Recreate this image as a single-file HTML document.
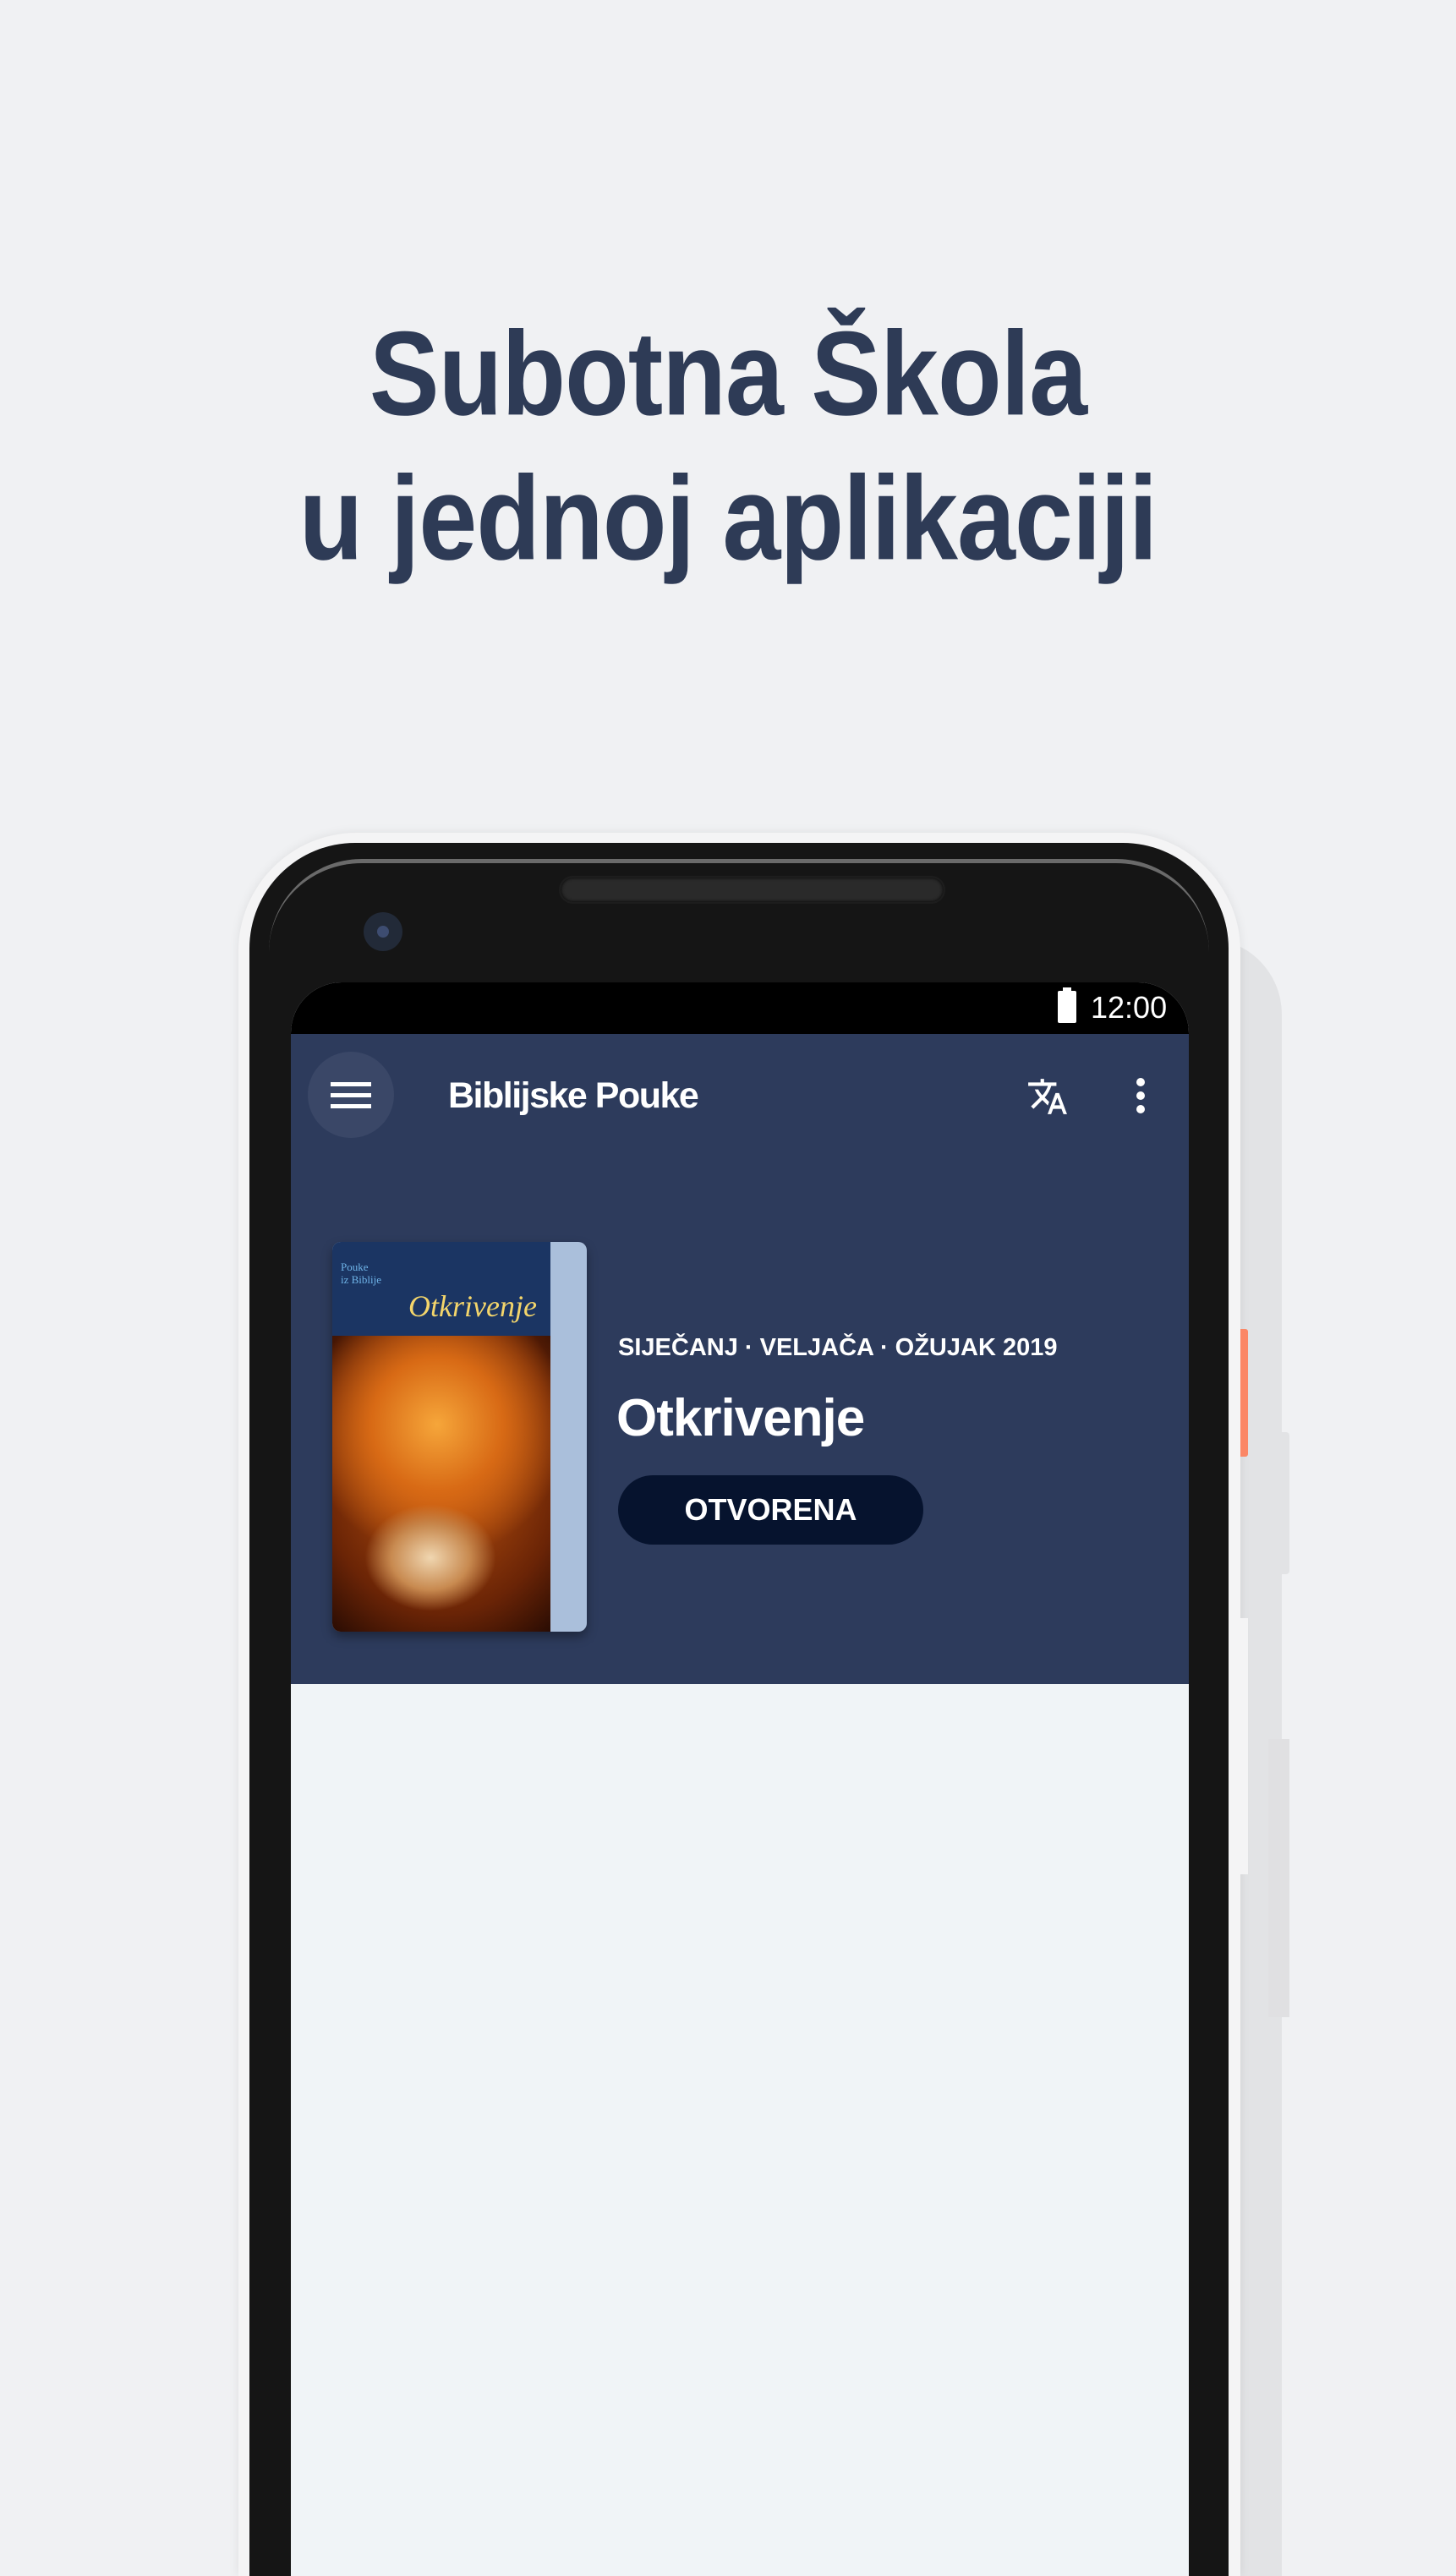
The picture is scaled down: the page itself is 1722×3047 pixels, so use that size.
<!DOCTYPE html>
<html style="overflow:hidden;width:1722px;height:3047px"><head><meta charset="utf-8"><style>
*{margin:0;padding:0;box-sizing:border-box}
body{width:1722px;height:3047px;background:#f0f1f3;position:relative;overflow:hidden;font-family:"Liberation Sans",sans-serif}
.a{position:absolute}
h1{position:absolute;left:0;width:1722px;text-align:center;color:#2e3b56;font-weight:700;font-size:124px;letter-spacing:-1px;transform:scaleY(1.14);transform-origin:center bottom}
</style></head><body>
<h1 style="top:378px;line-height:150px">Subotna Škola</h1>
<h1 style="top:549px;line-height:150px">u jednoj aplikaciji</h1>

<div class="a" style="left:1400px;top:1110px;width:116px;height:1937px;background:#e2e3e5;border-radius:0 90px 0 0"></div>
<div class="a" style="left:1500px;top:1694px;width:25px;height:168px;background:#e2e3e5;border-radius:0 4px 4px 0"></div>
<div class="a" style="left:1500px;top:2057px;width:25px;height:329px;background:#e0e0e2"></div>
<div class="a" style="left:282px;top:985px;width:1185px;height:2062px;background:#f4f4f5;border-radius:140px 140px 0 0;box-shadow:0 0 12px rgba(0,0,0,.08)"></div>
<div class="a" style="left:1467px;top:1572px;width:9px;height:151px;background:#fb8766;border-radius:0 3px 3px 0"></div>
<div class="a" style="left:1467px;top:1914px;width:9px;height:303px;background:#f4f4f5"></div>
<div class="a" style="left:295px;top:997px;width:1158px;height:2050px;background:#151515;border-radius:125px 125px 0 0"></div>
<div class="a" style="left:318px;top:1016px;width:1112px;height:200px;border-top:5px solid #6a6a6a;border-radius:110px 110px 0 0"></div>
<div class="a" style="left:661px;top:1036px;width:457px;height:33px;background:#2a2a2a;border:2px solid #1d1d1d;border-radius:17px;box-shadow:inset 0 0 4px #000"></div>
<div class="a" style="left:430px;top:1079px;width:46px;height:46px;background:#222a38;border-radius:50%"></div>
<div class="a" style="left:446px;top:1095px;width:14px;height:14px;background:#3d4c70;border-radius:50%"></div>
<div class="a" style="left:344px;top:1162px;width:1062px;height:1885px;background:#f0f4f7;border-radius:60px 60px 0 0;overflow:hidden">
  <div class="a" style="left:0;top:0;width:1062px;height:61px;background:#000"></div>
  <div class="a" style="left:907px;top:10px;width:22px;height:38px;background:#fff;border-radius:2px"></div>
  <div class="a" style="left:913px;top:6px;width:10px;height:5px;background:#fff"></div>
  <div class="a" style="left:946px;top:8px;color:#fff;font-size:36px;line-height:44px">12:00</div>
  <div class="a" style="left:0;top:61px;width:1062px;height:769px;background:#2d3b5c"></div>
  <div class="a" style="left:20px;top:82px;width:102px;height:102px;background:#3a4767;border-radius:50%"></div>
  <div class="a" style="left:47px;top:118px;width:48px;height:5px;background:#fff"></div>
  <div class="a" style="left:47px;top:131px;width:48px;height:5px;background:#fff"></div>
  <div class="a" style="left:47px;top:144px;width:48px;height:5px;background:#fff"></div>
  <div class="a" style="left:186px;top:106px;color:#fff;font-size:43px;font-weight:700;line-height:56px;letter-spacing:-1.5px">Biblijske Pouke</div>
  <svg class="a" style="left:870px;top:110px" width="50" height="50" viewBox="0 0 24 24"><path fill="#fff" d="M12.87 15.07l-2.54-2.51.03-.03A17.52 17.52 0 0014.07 6H17V4h-7V2H8v2H1v1.990h11.17C11.5 7.92 10.44 9.750 9 11.35 8.070 10.32 7.3 9.19 6.69 8h-2c.73 1.63 1.73 3.17 2.98 4.56l-5.09 5.02L4 19l5-5 3.11 3.11.76-2.04zM18.5 10h-2L12 22h2l1.12-3h4.75L21 22h2l-4.5-12zm-2.62 7l1.62-4.33L19.12 17h-3.24z"/></svg>
  <div class="a" style="left:1000px;top:113px;width:10px;height:10px;background:#fff;border-radius:50%"></div>
  <div class="a" style="left:1000px;top:129px;width:10px;height:10px;background:#fff;border-radius:50%"></div>
  <div class="a" style="left:1000px;top:145px;width:10px;height:10px;background:#fff;border-radius:50%"></div>
  <div class="a" style="left:49px;top:307px;width:301px;height:461px;border-radius:10px;overflow:hidden;box-shadow:0 6px 12px rgba(0,0,0,.35);background:#aabfdb">
    <div class="a" style="left:0;top:0;width:258px;height:111px;background:#1b3563"></div>
    <div class="a" style="left:0;top:111px;width:258px;height:350px;background:radial-gradient(ellipse 30% 18% at 45% 75%,#f0d6b0,#c88a50 60%,rgba(0,0,0,0) 100%),radial-gradient(ellipse 60% 45% at 48% 30%,#f6a63a,#d86a15 50%,rgba(140,50,5,0) 100%),radial-gradient(ellipse 80% 70% at 50% 45%,#c85a10,#6a2406 70%,#2a0c03)"></div>
    <div class="a" style="left:10px;top:22px;color:#6fb4e8;font-family:'Liberation Serif',serif;font-size:13px;line-height:15px">Pouke<br>iz Biblije</div>
    <div class="a" style="left:90px;top:55px;color:#f3d56b;font-family:'Liberation Serif',serif;font-style:italic;font-size:36px">Otkrivenje</div>
  </div>
  <div class="a" style="left:387px;top:414px;color:#fff;font-size:29px;font-weight:700;line-height:36px">SIJEČANJ · VELJAČA · OŽUJAK 2019</div>
  <div class="a" style="left:385px;top:478px;color:#fff;font-size:62px;font-weight:700;line-height:76px;letter-spacing:-1px">Otkrivenje</div>
  <div class="a" style="left:387px;top:583px;width:361px;height:82px;background:#06132e;border-radius:41px;color:#fff;font-size:36px;font-weight:700;text-align:center;line-height:82px">OTVORENA</div>
</div>
</body></html>
